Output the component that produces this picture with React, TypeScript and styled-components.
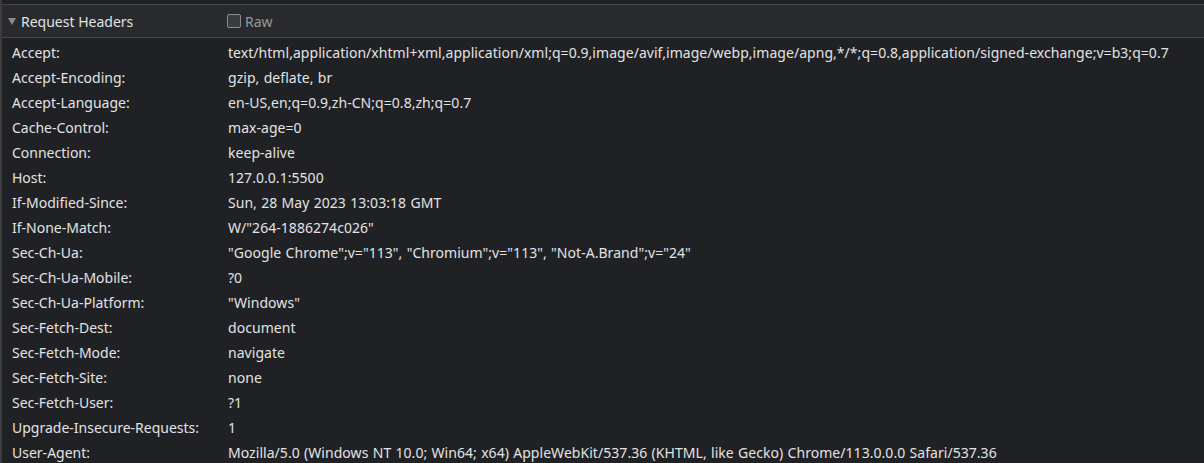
import React from "react";
import styled, { createGlobalStyle } from "styled-components";

const Global = createGlobalStyle`
  html, body { margin: 0; padding: 0; background: #202124; }
  body { font-family: "Noto Sans", "Open Sans", sans-serif; }
`;

const Panel = styled.div`
  width: 1204px;
  height: 463px;
  overflow: hidden;
  background: #202124;
  border-left: 2px solid #3c3c3f;
  box-sizing: border-box;
  padding-top: 4px;
`;

const HeaderBar = styled.div`
  display: flex;
  align-items: center;
  height: 32px;
  background: #292a2d;
  border-top: 1px solid #44464a;
  border-bottom: 1px solid #44464a;
  box-sizing: content-box;
  color: #e3e3e3;
  font-size: 14px;
`;

const Title = styled.div`
  display: flex;
  align-items: center;
  width: 225px;
  padding-left: 6px;
  box-sizing: border-box;
`;

const Triangle = styled.span`
  width: 0;
  height: 0;
  border-left: 4.5px solid transparent;
  border-right: 4.5px solid transparent;
  border-top: 7px solid #8a8b8e;
  margin-right: 5px;
  margin-top: 1px;
`;

const RawLabel = styled.label`
  display: flex;
  align-items: center;
  gap: 4px;
  color: #9a9b9e;
`;

const Box = styled.span`
  width: 12px;
  height: 12px;
  border: 1px solid #8a8b8e;
  border-radius: 2px;
  background: #3a3b3e;
`;

const Rows = styled.div`
  padding-top: 2px;
`;

const Row = styled.div`
  display: flex;
  height: 25px;
  align-items: center;
  font-size: 14px;
  color: #e3e3e3;
  white-space: nowrap;
`;

const Name = styled.div`
  width: 216px;
  padding-left: 10px;
  flex-shrink: 0;
`;

const Value = styled.div`
  letter-spacing: 0.045px;
  word-spacing: 0.6px;
`;

const headers: [string, string][] = [
  ["Accept:", "text/html,application/xhtml+xml,application/xml;q=0.9,image/avif,image/webp,image/apng,*/*;q=0.8,application/signed-exchange;v=b3;q=0.7"],
  ["Accept-Encoding:", "gzip, deflate, br"],
  ["Accept-Language:", "en-US,en;q=0.9,zh-CN;q=0.8,zh;q=0.7"],
  ["Cache-Control:", "max-age=0"],
  ["Connection:", "keep-alive"],
  ["Host:", "127.0.0.1:5500"],
  ["If-Modified-Since:", "Sun, 28 May 2023 13:03:18 GMT"],
  ["If-None-Match:", 'W/"264-1886274c026"'],
  ["Sec-Ch-Ua:", '"Google Chrome";v="113", "Chromium";v="113", "Not-A.Brand";v="24"'],
  ["Sec-Ch-Ua-Mobile:", "?0"],
  ["Sec-Ch-Ua-Platform:", '"Windows"'],
  ["Sec-Fetch-Dest:", "document"],
  ["Sec-Fetch-Mode:", "navigate"],
  ["Sec-Fetch-Site:", "none"],
  ["Sec-Fetch-User:", "?1"],
  ["Upgrade-Insecure-Requests:", "1"],
  ["User-Agent:", "Mozilla/5.0 (Windows NT 10.0; Win64; x64) AppleWebKit/537.36 (KHTML, like Gecko) Chrome/113.0.0.0 Safari/537.36"],
];

export default function App() {
  return (
    <>
      <Global />
      <Panel>
        <HeaderBar>
          <Title>
            <Triangle />
            Request Headers
          </Title>
          <RawLabel>
            <Box />
            Raw
          </RawLabel>
        </HeaderBar>
        <Rows>
          {headers.map(([n, v]) => (
            <Row key={n}>
              <Name>{n}</Name>
              <Value>{v}</Value>
            </Row>
          ))}
        </Rows>
      </Panel>
    </>
  );
}
